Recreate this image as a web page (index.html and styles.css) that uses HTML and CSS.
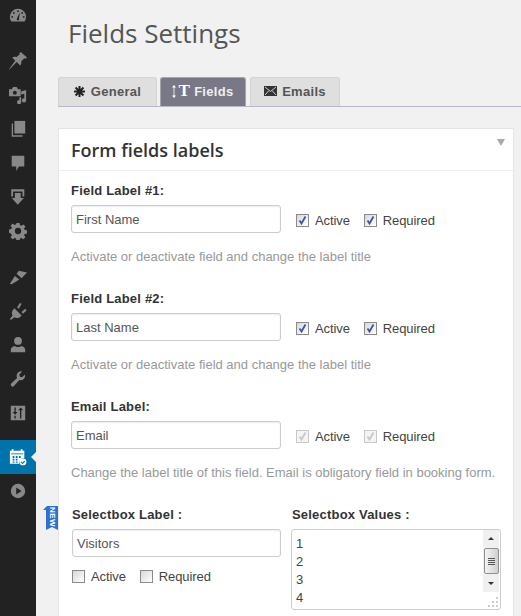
FILE: index.html
```html
<!DOCTYPE html>
<html lang="en">

<head>
    <meta charset="UTF-8">
    <meta name="viewport" content="width=device-width, initial-scale=1.0">
    <title>Fields Settings</title>
    <link rel="stylesheet" href="styles.css">
</head>

<body>
    <!-- Admin menu -->
    <nav class="sidebar">
        <div class="menu-item first">
            <svg viewBox="0 0 20 20"><path d="M10 2a9 9 0 0 0-9 9c0 2 .6 3.700 1.700 5h14.600A8.900 8.900 0 0 0 19 11a9 9 0 0 0-9-9z"/><g fill="#222"><circle cx="10" cy="4.600" r="1"/><circle cx="5.400" cy="6.600" r="1"/><circle cx="14.600" cy="6.600" r="1"/><circle cx="3.600" cy="11" r="1"/><circle cx="16.400" cy="11" r="1"/><path d="M9 12.500 11.500 7l.5.200-1 5.300a1.400 1.400 0 1 1-2 0z"/></g></svg>
        </div>
        <div class="menu-item gap">
            <svg viewBox="0 0 20 20"><path d="M13 0l7 6-1.500 1.500-1.500-.5-3.500 3.500c.5 2 0 3.500-1 4.500L8.500 11 1 19l-1 1 .5-1.500L7 9.500 3.500 6.500C5 5 7 5 8.500 5.500L12 2.500l-.5-1z"/></svg>
        </div>
        <div class="menu-item">
            <svg viewBox="0 0 20 20"><path d="M0 3.500h3l1.500-2.500h4L10 3.500h3v8H0z"/><circle cx="6.500" cy="7.500" r="2.200" fill="#222"/><path d="M19 4.500V16a2.300 2.300 0 1 1-2-2.300V8.500l-3.500 1V18a2.300 2.300 0 1 1-2-2.300V12.500h2V6z"/></svg>
        </div>
        <div class="menu-item">
            <svg viewBox="0 0 20 20"><path d="M6 1h12v14H6z"/><path d="M3 4h1.500v13H15v1.500H3z"/></svg>
        </div>
        <div class="menu-item">
            <svg viewBox="0 0 20 20"><path d="M3 2h14v12h-6l-3 5v-5H3z"/></svg>
        </div>
        <div class="menu-item">
            <svg viewBox="0 0 20 20"><path d="M2.500 1.500H17v8h-2V4H4.500v5.500h-2z"/><path d="M6.500 5.500h6.500V11h3.500L9.700 18.500 3 11h3.500z"/></svg>
        </div>
        <div class="menu-item">
            <svg viewBox="0 0 20 20"><path fill-rule="evenodd" d="M8.300 1h3.400l.5 2.600 1.500.6 2.200-1.500 2.400 2.400-1.500 2.200.6 1.500 2.600.5v3.400l-2.600.5-.6 1.500 1.500 2.200-2.400 2.400-2.200-1.500-1.500.6-.5 2.600H8.300l-.5-2.600-1.500-.6-2.200 1.500-2.400-2.400 1.500-2.200-.6-1.500L0 11.700V8.300l2.600-.5.6-1.500-1.500-2.200 2.400-2.400 2.200 1.500 1.500-.6zM10 6.500a3.500 3.500 0 1 0 0 7 3.500 3.500 0 0 0 0-7z"/></svg>
        </div>
        <div class="menu-item gap">
            <svg viewBox="0 0 20 20"><path d="M1 17.500 6.500 9l5 3.800L3 18z"/><path d="M8.500 6.500 11 3l9 2-6 6.500z"/></svg>
        </div>
        <div class="menu-item">
            <svg viewBox="0 0 20 20"><path d="M1 19l3-4c-1.500-2-1-5 1-7l1-1 8 8-1 1c-2 2-5 2.500-7 1l-4 3z"/><path d="M9 6l3-5 2 1-3 5.500z"/><path d="M14 11l4-3.500 1.500 2-4 3.500z"/></svg>
        </div>
        <div class="menu-item">
            <svg viewBox="0 0 20 20"><circle cx="10" cy="5.500" r="4.300"/><path d="M2 18v-2.500c0-2.500 2-4 4.500-4.500 1 1 2.200 1.300 3.500 1.300s2.500-.3 3.500-1.300c2.500.5 4.500 2 4.500 4.500V18z"/></svg>
        </div>
        <div class="menu-item">
            <svg viewBox="0 0 20 20"><path d="M13 1.500a5 5 0 0 1 1.600.3L11.500 5l.5 2.500 2.500.5 3.200-3a5 5 0 0 1-6.200 6.200L5.500 17.800a2 2 0 0 1-3-.1 2 2 0 0 1 0-2.700L9 8.800a5 5 0 0 1 4-7.300z"/></svg>
        </div>
        <div class="menu-item">
            <svg viewBox="0 0 20 20"><path fill-rule="evenodd" d="M2 2h16v16H2zM6 4v5H4l2.800 3L9.500 9h-2V4zM13 4l-2.800 3h2v9h1.500V7h2zM6 13v3h1.500v-3z"/></svg>
        </div>
        <div class="menu-item active">
            <svg viewBox="0 0 20 20"><path fill="#fff" d="M1 3h2V1.500h2V3h8V1.500h2V3h2v8.500a5 5 0 0 0-5.500 6H1z"/><g fill="#0073aa"><path d="M2.500 6h13v1h-13z"/><path d="M4 9h2v2H4zM7.500 9h2v2h-2zM11 9h2v2h-2zM4 12h2v2H4zM7.500 12h2v2h-2zM4 15h2v1.500H4zM7.500 15h2v1.500h-2z"/></g><circle cx="15.500" cy="15.500" r="3.800" fill="#fff"/><path d="M13.500 15.500l1.500 1.500 2.500-2.500" fill="none" stroke="#0073aa" stroke-width="1.300"/></svg>
        </div>
        <div class="menu-item">
            <svg viewBox="0 0 20 20"><path fill-rule="evenodd" d="M10 2a8 8 0 1 1 0 16 8 8 0 0 1 0-16zM8 6v8l6-4z"/></svg>
        </div>
    </nav>

    <main class="content">
        <h1>Fields Settings</h1>

        <div class="tabs">
            <a class="tab tab-general">
                <svg class="tab-svg" viewBox="0 0 12 12"><path d="M6 0v12M0 6h12M1.700 1.700l8.600 8.600M10.300 1.700l-8.600 8.600" stroke="#222" stroke-width="2.200"/></svg>General
            </a>
            <a class="tab tab-fields selected">
                <svg class="tab-arrows" viewBox="0 0 5 16"><path d="M2.500 0 5 3H3v10h2l-2.500 3L0 13h2V3H0z"/></svg><span class="tab-t">T</span>Fields
            </a>
            <a class="tab tab-emails">
                <svg class="tab-svg wide" viewBox="0 0 13 10"><path d="M0 0h13v10H0z" fill="#333"/><path d="M1 1l5.500 4.500L12 1M1 9l4-4.500M12 9 8 4.500" fill="none" stroke="#ddd" stroke-width=".9"/></svg>Emails
            </a>
        </div>

        <section class="panel">
            <span class="ribbon"><span class="ribbon-text">NEW</span></span>
            <header class="panel-head">
                <h2>Form fields labels</h2>
                <span class="toggle"></span>
            </header>

            <div class="field">
                <label class="field-label">Field Label #1:</label>
                <div class="field-row">
                    <input class="text-input" type="text" value="First Name">
                    <span class="check-label"><span class="check on"><svg viewBox="0 0 11 11"><path d="M2.500 5.500l2 3L8.500 1.500"/></svg></span>Active</span>
                    <span class="check-label"><span class="check on"><svg viewBox="0 0 11 11"><path d="M2.500 5.500l2 3L8.500 1.500"/></svg></span>Required</span>
                </div>
                <p class="hint">Activate or deactivate field and change the label title</p>
            </div>

            <div class="field">
                <label class="field-label">Field Label #2:</label>
                <div class="field-row">
                    <input class="text-input" type="text" value="Last Name">
                    <span class="check-label"><span class="check on"><svg viewBox="0 0 11 11"><path d="M2.500 5.500l2 3L8.500 1.500"/></svg></span>Active</span>
                    <span class="check-label"><span class="check on"><svg viewBox="0 0 11 11"><path d="M2.500 5.500l2 3L8.500 1.500"/></svg></span>Required</span>
                </div>
                <p class="hint">Activate or deactivate field and change the label title</p>
            </div>

            <div class="field">
                <label class="field-label">Email Label:</label>
                <div class="field-row">
                    <input class="text-input" type="text" value="Email">
                    <span class="check-label"><span class="check off"><svg viewBox="0 0 11 11"><path d="M2.500 5.500l2 3L8.500 1.500"/></svg></span>Active</span>
                    <span class="check-label"><span class="check off"><svg viewBox="0 0 11 11"><path d="M2.500 5.500l2 3L8.500 1.500"/></svg></span>Required</span>
                </div>
                <p class="hint">Change the label title of this field. Email is obligatory field in booking form.</p>
            </div>

            <div class="select-row">
                <div class="select-col">
                    <label class="field-label">Selectbox Label :</label>
                    <input class="text-input" type="text" value="Visitors">
                    <div class="select-checks">
                        <span class="check-label"><span class="check"></span>Active</span>
                        <span class="check-label"><span class="check"></span>Required</span>
                    </div>
                </div>
                <div class="values-col">
                    <label class="field-label">Selectbox Values :</label>
                    <div class="values-box">
                        <div class="values-list">1<br>2<br>3<br>4</div>
                        <div class="scrollbar">
                            <span class="arrow up"></span>
                            <span class="thumb"></span>
                            <span class="arrow down"></span>
                        </div>
                        <svg class="grip" viewBox="0 0 12 12"><path d="M9 1h2v2H9zM5 5h2v2H5zM9 5h2v2H9zM1 9h2v2H1zM5 9h2v2H5zM9 9h2v2H9z"/></svg>
                    </div>
                </div>
            </div>
        </section>
    </main>
</body>

</html>
```

FILE: styles.css
```css
/* Global Styles */
html,
body {
    height: 100%;
}

body {
    margin: 0;
    display: flex;
    overflow: hidden;
    background-color: #f1f1f1;
    font-family: 'Liberation Sans', Arial, sans-serif;
    color: #444;
}

/* Sidebar */
.sidebar {
    width: 36px;
    flex-shrink: 0;
    background-color: #222;
}

.menu-item {
    height: 34px;
    display: flex;
    align-items: center;
    justify-content: center;
    position: relative;
}

.menu-item.first {
    height: 32px;
}

.menu-item svg {
    width: 18px;
    height: 18px;
    fill: #888;
}

.menu-item.gap {
    margin-top: 12px;
}

.menu-item.active {
    background-color: #0073aa;
    margin-top: 10px;
}

.menu-item.active::after {
    content: "";
    position: absolute;
    right: 0;
    top: 12px;
    border: 5px solid transparent;
    border-right-color: #f1f1f1;
    border-left-width: 0;
}

/* Content */
.content {
    flex: 1;
    min-width: 0;
    padding: 0 7px 0 22px;
}

h1 {
    margin: 0;
    padding: 17px 0 0 10px;
    font-family: 'Open Sans', sans-serif;
    font-size: 26px;
    font-weight: 400;
    line-height: 32px;
    color: #555;
}

/* Tabs */
.tabs {
    display: flex;
    gap: 3px;
    margin: 28px -7px 0 0;
    height: 29px;
    border-bottom: 1px solid #b8b8c8;
}

.tab {
    display: flex;
    align-items: center;
    justify-content: center;
    height: 29px;
    box-sizing: border-box;
    padding-bottom: 2px;
    border: 1px solid #d4d4d4;
    border-bottom: none;
    border-radius: 3px 3px 0 0;
    background-color: #dfdfdf;
    font-size: 13px;
    font-weight: bold;
    letter-spacing: 0.3px;
    color: #555;
}

.tab-general {
    width: 99px;
}

.tab-fields {
    width: 86px;
}

.tab-emails {
    width: 90px;
    margin-left: 1px;
}

.tab.selected {
    background-color: #797886;
    border-color: #a5a5b0;
    color: #eee;
}

.tab-svg {
    width: 11px;
    height: 11px;
    margin-right: 6px;
}

.tab-svg.wide {
    width: 13px;
    height: 10px;
    margin-right: 5px;
}

.tab-arrows {
    width: 4px;
    height: 13px;
    margin-right: 2px;
    fill: #fff;
}

.tab-t {
    margin-right: 4px;
    color: #fff;
    font-family: 'Liberation Serif', serif;
    font-size: 17px;
    font-weight: bold;
}

/* Panel */
.panel {
    position: relative;
    margin-top: 21px;
    background-color: #fff;
    border: 1px solid #e5e5e5;
    height: 600px;
}

.panel-head {
    height: 41px;
    border-bottom: 1px solid #eee;
    display: flex;
    align-items: center;
    justify-content: space-between;
    padding: 0 12px;
}

h2 {
    margin: 0;
    font-family: 'Open Sans', sans-serif;
    font-size: 18px;
    font-weight: 600;
    color: #333;
}

.toggle {
    align-self: flex-start;
    margin: 10px -4px 0 0;
    border: 4px solid transparent;
    border-top: 7px solid #aaa;
    border-bottom: none;
}

/* NEW ribbon */
.ribbon {
    position: absolute;
    left: -16px;
    top: 377px;
    width: 15px;
    height: 24px;
    background-color: #2f6fcf;
    clip-path: polygon(0 4px, 4px 0, 100% 0, 100% 100%, 60% 88%, 20% 100%, 20% 4px);
    display: flex;
    align-items: center;
    justify-content: center;
}

.ribbon-text {
    margin: -3px 0 0 3px;
    writing-mode: vertical-rl;
    font-size: 8px;
    font-weight: bold;
    letter-spacing: 0.4px;
    line-height: 10px;
    color: #fff;
}

/* Form Styles */
.field {
    padding: 0 12px;
    height: 108px;
}

.panel-head + .field {
    padding-top: 12px;
}

.field-label {
    display: block;
    font-size: 13px;
    font-weight: bold;
    letter-spacing: 0.2px;
    line-height: 16px;
    color: #333;
}

.field-row {
    display: flex;
    align-items: center;
    margin-top: 6px;
}

.text-input {
    width: 210px;
    height: 28px;
    box-sizing: border-box;
    padding: 0 4px;
    border: 1px solid #ccc;
    border-radius: 3px;
    font-family: inherit;
    font-size: 13px;
    color: #555;
    box-shadow: inset 0 1px 2px rgba(0, 0, 0, 0.07);
}

.check-label {
    display: inline-flex;
    align-items: center;
    font-size: 13px;
    letter-spacing: -0.1px;
    color: #444;
}

.field-row .check-label {
    padding-top: 2px;
}

.field-row .check-label:first-of-type {
    margin-left: 15px;
}

.check-label + .check-label {
    margin-left: 14px;
}

.check {
    width: 13px;
    height: 13px;
    box-sizing: border-box;
    margin-right: 6px;
    border: 1px solid #8a8a8a;
    background: linear-gradient(135deg, #d8d8d8, #fff);
}

.check svg {
    display: block;
    width: 11px;
    height: 11px;
    fill: none;
    stroke: #3f57a0;
    stroke-width: 1.8;
}

.check.off {
    border-color: #c8c8c8;
    background: #f4f4f4;
}

.check.off svg {
    stroke: #c8c8c8;
}

.hint {
    margin: 16px 0 0;
    font-size: 13px;
    line-height: 16px;
    white-space: nowrap;
    color: #999;
}

/* Selectbox row */
.select-row {
    display: flex;
    gap: 11px;
    padding: 0 13px;
}

.select-col {
    width: 209px;
}

.select-col .text-input {
    display: block;
    width: 209px;
    margin-top: 6px;
}

.select-checks {
    display: flex;
    align-items: center;
    margin-top: 12px;
}

.values-col {
    width: 209px;
}

.values-box {
    position: relative;
    margin: 6px 0 0 -1px;
    width: 210px;
    height: 81px;
    box-sizing: border-box;
    border: 1px solid #ccc;
    border-radius: 3px;
    overflow: hidden;
}

.values-list {
    padding: 5px 4px;
    font-size: 13px;
    line-height: 18px;
    color: #444;
}

.scrollbar {
    position: absolute;
    top: 0;
    right: 1px;
    width: 16px;
    height: 62px;
    background-color: #f0f0f0;
    display: flex;
    flex-direction: column;
    align-items: center;
    justify-content: space-between;
}

.arrow {
    margin: 7px 0;
    border: 3px solid transparent;
}

.arrow.up {
    border-bottom: 3px solid #333;
    border-top: none;
}

.arrow.down {
    border-top: 3px solid #333;
    border-bottom: none;
}

.thumb {
    width: 15px;
    height: 26px;
    box-sizing: border-box;
    border: 1px solid #8f8f8f;
    border-radius: 2px;
    background: repeating-linear-gradient(to bottom, #555 0 1px, transparent 1px 2px) center / 7px 7px no-repeat, linear-gradient(to right, #f4f4f4, #d0d0d0);
}

.grip {
    position: absolute;
    right: 1px;
    bottom: 1px;
    width: 12px;
    height: 12px;
    fill: #ccc;
}
```
